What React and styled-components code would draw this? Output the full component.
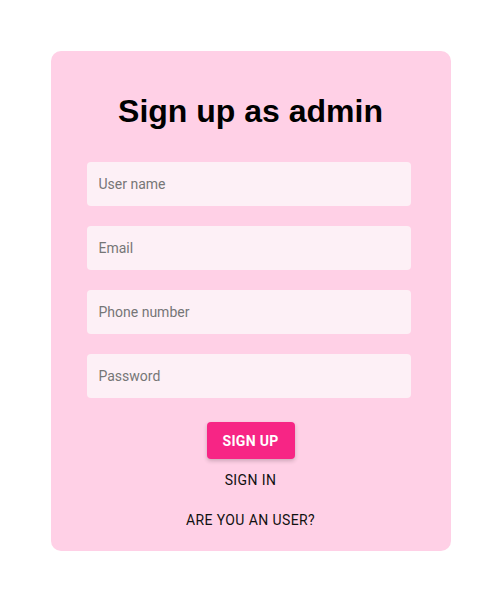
import React from 'react';
import styled, { createGlobalStyle } from 'styled-components';

const GlobalStyle = createGlobalStyle`
  body {
    margin: 0;
    background: #ffffff;
    font-family: Roboto, "Liberation Sans", Arial, sans-serif;
  }
`;

const Page = styled.div`
  display: flex;
  justify-content: center;
  padding: 51px 0 0 1px;
`;

const Card = styled.form`
  width: 400px;
  box-sizing: border-box;
  background: #ffd0e6;
  border-radius: 10px;
  padding: 40px 36px 21px;
  display: flex;
  flex-direction: column;
  align-items: center;
`;

const Title = styled.h1`
  margin: 0 0 31px;
  font-family: "Liberation Sans", Arial, sans-serif;
  font-size: 32px;
  font-weight: 700;
  color: #000;
  line-height: 40px;
`;

const Fields = styled.div`
  align-self: flex-start;
  display: flex;
  flex-direction: column;
  gap: 20px;
  width: 324px;
`;

const Input = styled.input`
  height: 44px;
  box-sizing: border-box;
  width: 100%;
  border: none;
  border-radius: 4px;
  background: #fdf0f6;
  padding: 0 12px;
  font-family: Roboto, "Liberation Sans", sans-serif;
  font-size: 14px;
  color: #333;
  outline: none;
  &::placeholder {
    color: #767676;
  }
`;

const Button = styled.button`
  margin-top: 24px;
  width: 88px;
  height: 37px;
  border: none;
  border-radius: 4px;
  background: #f72585;
  color: #fff;
  font-family: Roboto, "Liberation Sans", sans-serif;
  font-weight: 700;
  font-size: 14px;
  letter-spacing: 0.3px;
  box-shadow: 0 2px 4px rgba(0, 0, 0, 0.2);
`;

const TextLink = styled.a`
  display: block;
  font-family: Roboto, "Liberation Sans", sans-serif;
  font-size: 14px;
  font-weight: 400;
  color: #111;
  letter-spacing: 0.4px;
  text-decoration: none;
  margin-top: ${props => props.gap}px;
  line-height: 20px;
`;

export default function App() {
  return (
    <Page>
      <GlobalStyle />
      <Card onSubmit={e => e.preventDefault()}>
        <Title>Sign up as admin</Title>
        <Fields>
          <Input type="text" placeholder="User name" />
          <Input type="email" placeholder="Email" />
          <Input type="tel" placeholder="Phone number" />
          <Input type="password" placeholder="Password" />
        </Fields>
        <Button type="submit">SIGN UP</Button>
        <TextLink gap={11}>SIGN IN</TextLink>
        <TextLink gap={20}>ARE YOU AN USER?</TextLink>
      </Card>
    </Page>
  );
}
